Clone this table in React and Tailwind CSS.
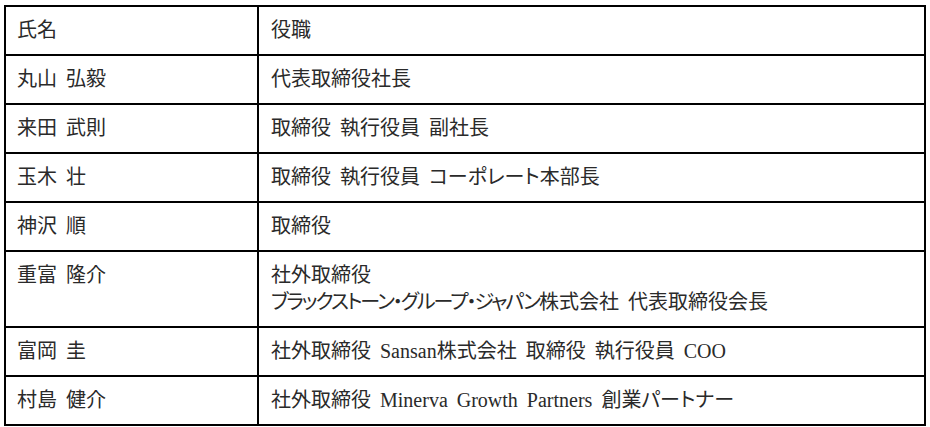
import React from "react";

const rows = [
  ["丸山 弘毅", ["代表取締役社長"]],
  ["来田 武則", ["取締役 執行役員 副社長"]],
  ["玉木 壮", ["取締役 執行役員 コーポレート本部長"]],
  ["神沢 順", ["取締役"]],
  [
    "重富 隆介",
    [
      "社外取締役",
      <>
        <span className="tracking-[-2px]">ブラックストーン・グループ・ジャパン</span>
        株式会社 代表取締役会長
      </>,
    ],
  ],
  ["富岡 圭", ["社外取締役 Sansan株式会社 取締役 執行役員 COO"]],
  ["村島 健介", ["社外取締役 Minerva Growth Partners 創業パートナー"]],
];

export default function App() {
  return (
    <div
      className="bg-white w-[930px] h-[427px] pt-[5px] pl-[4px] text-[#2a2a2a] text-[20px] leading-[27px] [word-spacing:4px] [font-feature-settings:'palt']"
      style={{ fontFamily: '"Liberation Serif", "Noto Sans CJK JP", serif' }}
    >
      <table className="border-collapse w-[922px] table-fixed">
        <colgroup>
          <col className="w-[253px]" />
          <col />
        </colgroup>
        <tbody>
          <tr>
            <td className="border-2 border-black px-[11px] py-[10px] align-top">氏名</td>
            <td className="border-2 border-black px-[12px] py-[10px] align-top">役職</td>
          </tr>
          {rows.map(([name, roles]) => (
            <tr key={name}>
              <td className="border-2 border-black px-[11px] py-[10px] align-top">{name}</td>
              <td className="border-2 border-black px-[12px] py-[10px] align-top">
                {roles.map((r, i) => (
                  <div key={i}>{r}</div>
                ))}
              </td>
            </tr>
          ))}
        </tbody>
      </table>
    </div>
  );
}
